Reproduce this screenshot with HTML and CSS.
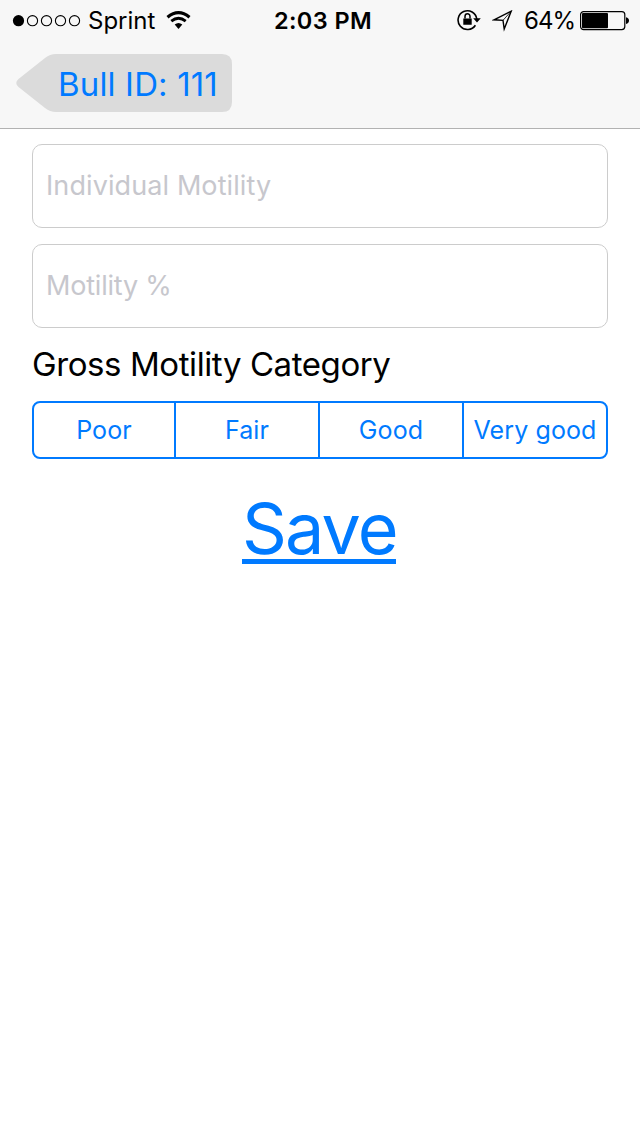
FILE: index.html
```html
<!DOCTYPE html>
<html lang="en">
<head>
<meta charset="utf-8">
<title>Bull ID: 111</title>
<link rel="stylesheet" href="styles.css">
</head>
<body>
<header class="header">
  <div class="status">
    <div class="status-left">
      <svg class="signal" width="70" height="14" viewBox="0 0 70 14">
        <circle cx="6.5" cy="6.7" r="5.6"/>
        <g fill="none" stroke="#000" stroke-width="1.1"><circle cx="20.5" cy="6.7" r="5.1"/><circle cx="34.5" cy="6.7" r="5.1"/><circle cx="48.5" cy="6.7" r="5.1"/><circle cx="62.5" cy="6.7" r="5.1"/></g>
      </svg>
      <span class="carrier">Sprint</span>
      <svg class="wifi" width="26" height="20" viewBox="0 0 26 20">
        <g fill="none" stroke="#000"><path d="M1.5 6.2Q12.5-2.8 23.5 6.2" stroke-width="3.2"/><path d="M5.3 10.2Q12.5 4.3 19.7 10.2" stroke-width="2.8"/></g>
        <path d="M8.7 13.4Q12.5 10.4 16.3 13.4L12.5 18Z"/>
      </svg>
    </div>
    <span class="clock">2:03 PM</span>
    <div class="status-right">
      <svg class="lock" width="24" height="22" viewBox="0 0 24 22">
        <path d="M18.4 16.2A9.4 9.4 0 1 1 19.8 10" fill="none" stroke="#000" stroke-width="1.6"/>
        <path d="M16.2 9.2h7.6L20 13.6zM6.3 9.4h8.4v6.3H6.3z"/>
        <path d="M8 9.5V7.5a2.5 2.7 0 0 1 5 0v2" fill="none" stroke="#000" stroke-width="1.5"/>
      </svg>
      <svg class="location" width="22" height="22" viewBox="0 0 22 22">
        <path d="M2 9.8L19.2 1.2L12.2 19L11 10.3Z" fill="none" stroke="#000" stroke-width="1.4"/><path d="M11 10.3L19.2 1.2" stroke="#000" stroke-width=".8"/>
      </svg>
      <span class="percent">64%</span>
      <svg class="battery" width="50" height="20" viewBox="0 0 50 20">
        <rect x=".6" y=".6" width="44.2" height="18" rx="3" fill="none" stroke="#000" stroke-width="1.2"/>
        <rect x="2" y="2" width="26" height="15.2" rx="1"/>
        <path d="M46 6.2q3 .6 3 3.4t-3 3.4z"/>
      </svg>
    </div>
  </div>
  <a class="back">
    <svg class="back-shape" width="216" height="58" viewBox="0 0 216 58">
      <path d="M40 0H206Q216 0 216 10V48Q216 58 206 58H40Q34 58 29 54L2.5 33Q-2 29 2.5 25L29 4Q34 0 40 0Z" fill="#dbdbdb"/>
    </svg>
    <span class="back-label">Bull ID: 111</span>
  </a>
</header>
<main class="form">
  <div class="field"><span class="ph-motility">Individual Motility</span></div>
  <div class="field"><span class="ph-percent">Motility %</span></div>
  <h1 class="heading">Gross Motility Category</h1>
  <div class="segments">
    <div class="segment">Poor</div>
    <div class="segment">Fair</div>
    <div class="segment">Good</div>
    <div class="segment wide">Very good</div>
  </div>
  <a class="save">Save</a>
</main>
</body>
</html>
```
FILE: styles.css
```css
* { box-sizing: border-box; }
body { margin: 0; height: 1136px; background: #fff; font-family: Inter, "Liberation Sans", sans-serif; color: #000; overflow: hidden; }
svg { display: block; flex: none; }
.header { height: 129px; background: #f7f7f7; border-bottom: 1px solid #b2b2b2; }
.status { height: 41px; display: grid; grid-template-columns: 1fr auto 1fr; align-items: center; font-size: 24px; line-height: 40px; white-space: nowrap; }
.status-left { display: flex; align-items: center; padding-left: 12px; }
.carrier { margin-left: 6px; width: 68px; letter-spacing: 0; }
.wifi { margin-left: 10px; }
.clock { font-size: 23.5px; font-weight: 600; letter-spacing: .4px; padding-left: 6px; }
.status-right { display: flex; align-items: center; justify-content: flex-end; padding-right: 10px; }
.lock { margin-top: -1px; }
.location { margin-left: 11px; }
.percent { margin-left: 10px; width: 51px; letter-spacing: -.9px; }
.battery { margin-left: 5px; }
.back { display: grid; width: 216px; height: 58px; margin: 13px 0 0 16px; color: #007aff; }
.back-shape, .back-label { grid-area: 1 / 1; }
.back-label { padding-left: 42px; font-size: 33px; line-height: 60px; letter-spacing: .15px; white-space: nowrap; }
.form { display: flex; flex-direction: column; padding: 15px 32px 0; }
.field { height: 84px; margin-bottom: 16px; padding-left: 13px; border: 1px solid #ccc; border-radius: 10px; color: #c7c7cd; font-size: 27px; line-height: 82px; white-space: nowrap; }
.ph-motility { letter-spacing: .1px; }
.ph-percent { letter-spacing: -.2px; }
.heading { margin: 0; height: 57px; font-size: 33px; font-weight: 400; line-height: 40px; letter-spacing: -.41px; white-space: nowrap; }
.segments { display: grid; grid-template-columns: 140px 144px 144px 144px; height: 58px; border: 2px solid #007aff; border-radius: 8px; color: #007aff; font-size: 25px; line-height: 54px; text-align: center; white-space: nowrap; }
.segment { letter-spacing: .1px; }
.segment + .segment { border-left: 2px solid #007aff; }
.save { align-self: center; width: 154px; height: 78px; margin: 27px 2px 0 0; border-bottom: 5px solid #007aff; color: #007aff; font-size: 70px; line-height: 86px; letter-spacing: -1.8px; white-space: nowrap; }
```
